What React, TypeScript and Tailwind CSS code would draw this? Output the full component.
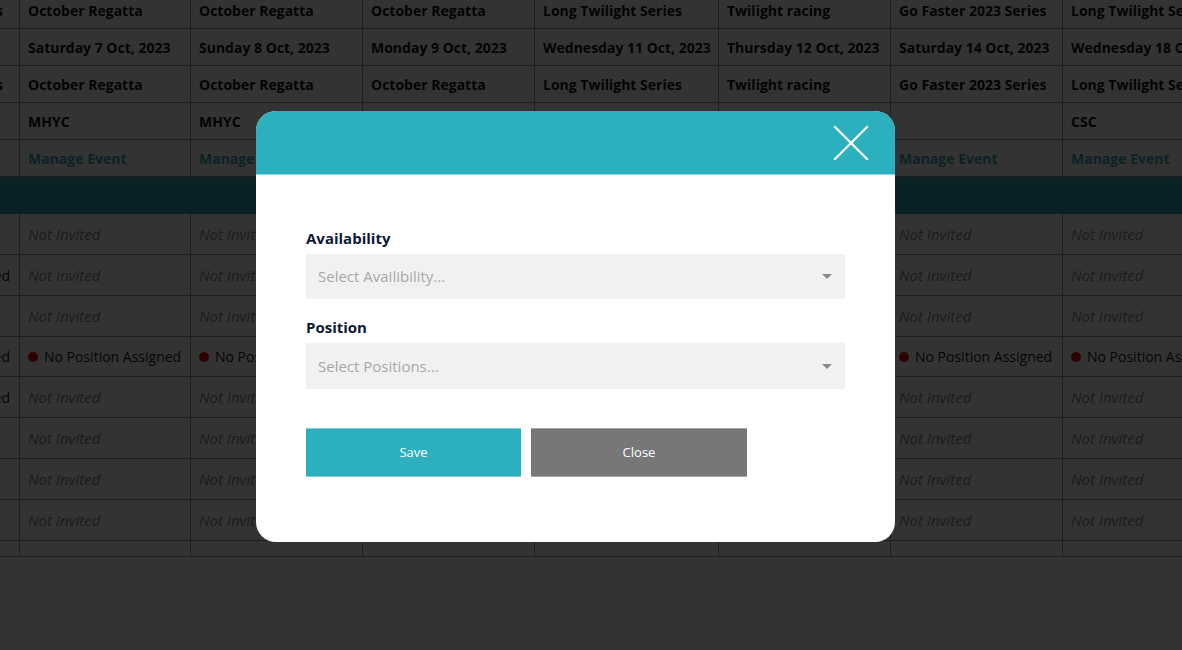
import React from 'react';

interface EventCol {
  width: string;
  series: string;
  date: string;
  club: string;
}

const columns: EventCol[] = [
  { width: 'w-[171px]', series: 'October Regatta', date: 'Saturday 7 Oct, 2023', club: 'MHYC' },
  { width: 'w-[172px]', series: 'October Regatta', date: 'Sunday 8 Oct, 2023', club: 'MHYC' },
  { width: 'w-[172px]', series: 'October Regatta', date: 'Monday 9 Oct, 2023', club: 'MHYC' },
  { width: 'w-[184px]', series: 'Long Twilight Series', date: 'Wednesday 11 Oct, 2023', club: 'MHYC' },
  { width: 'w-[172px]', series: 'Twilight racing', date: 'Thursday 12 Oct, 2023', club: 'MHYC' },
  { width: 'w-[172px]', series: 'Go Faster 2023 Series', date: 'Saturday 14 Oct, 2023', club: '' },
  { width: 'w-[172px]', series: 'Long Twilight Series', date: 'Wednesday 18 Oct, 2023', club: 'CSC' },
];

// rows of the crew grid: label tail shown in the clipped first column
const crewRows = [
  { label: '', status: 'not' },
  { label: 'Accepted', status: 'not' },
  { label: '', status: 'not' },
  { label: 'Accepted', status: 'none' },
  { label: 'Accepted', status: 'not' },
  { label: '', status: 'not' },
  { label: '', status: 'not' },
  { label: '', status: 'not' },
];

const HeadRow: React.FC<{ label?: string; h: string; children: (c: EventCol, i: number) => React.ReactNode }> = ({ label, h, children }) => (
  <div className={`flex ${h} border-b border-[#9a9a9a]`}>
    <div className="w-[20px] shrink-0 border-r border-[#9a9a9a] overflow-hidden flex items-center justify-end pr-[16px] whitespace-nowrap font-bold text-[#111]">
      {label}
    </div>
    {columns.map((c, i) => (
      <div key={i} className={`${c.width} shrink-0 border-r border-[#9a9a9a] flex items-center px-2 whitespace-nowrap overflow-hidden`}>
        {children(c, i)}
      </div>
    ))}
    <div className="w-[172px] shrink-0" />
  </div>
);

const App: React.FC = () => {
  return (
    <div className="relative w-[1182px] h-[650px] overflow-hidden bg-white font-['Open_Sans',sans-serif] text-[14px]">
      {/* Underlying schedule grid (scrolled) */}
      <div className="-mt-2">
        <HeadRow label="Series" h="h-[37px]">
          {(c) => <span className="font-bold text-[#111]">{c.series}</span>}
        </HeadRow>
        <HeadRow h="h-[37px]">
          {(c) => <span className="font-bold text-[#111]">{c.date}</span>}
        </HeadRow>
        <HeadRow label="Series" h="h-[37px]">
          {(c) => <span className="font-bold text-[#111]">{c.series}</span>}
        </HeadRow>
        <HeadRow h="h-[37px]">
          {(c) => <span className="font-bold text-[#111]">{c.club}</span>}
        </HeadRow>
        <HeadRow h="h-[37px]">
          {() => <span className="font-bold text-[#3aaab6]">Manage Event</span>}
        </HeadRow>
        <div className="h-[37px] bg-[#34a8b8]" />
        {crewRows.map((r, ri) => (
          <div key={ri} className={`flex ${ri === 3 ? 'h-[40px]' : 'h-[41px]'} border-b border-[#9a9a9a]`}>
            <div className="w-[20px] shrink-0 border-r border-[#9a9a9a] overflow-hidden flex items-center justify-end pr-[9px] whitespace-nowrap text-[#222]">
              {r.label}
            </div>
            {columns.map((c, i) => (
              <div key={i} className={`${c.width} shrink-0 border-r border-[#9a9a9a] flex items-center px-2 whitespace-nowrap overflow-hidden`}>
                {r.status === 'not' ? (
                  <span className="italic text-[15px] text-[#8a8a8a]">Not Invited</span>
                ) : (
                  <span className="flex items-center gap-[6px] text-[#222]">
                    <span className="w-[10px] h-[10px] rounded-full bg-[#e00000]" />
                    No Position Assigned
                  </span>
                )}
              </div>
            ))}
          </div>
        ))}
        <div className="flex h-[16px] border-b border-[#9a9a9a]">
          <div className="w-[20px] shrink-0 border-r border-[#9a9a9a]" />
          {columns.map((c, i) => (
            <div key={i} className={`${c.width} shrink-0 border-r border-[#9a9a9a]`} />
          ))}
        </div>
      </div>

      {/* Backdrop + modal */}
      <div className="absolute inset-0 bg-black/80 pl-[256px] pt-[111px]">
        <div className="w-[639px] h-[431px] bg-white rounded-[20px] overflow-hidden flex flex-col">
          <div className="h-[64px] bg-[#2cb0bd] border-b border-[#8fd9e0] flex items-center justify-end pr-[26px] shrink-0">
            <svg width="36" height="36" viewBox="0 0 36 36" fill="none" stroke="white" strokeWidth="2.2" strokeLinecap="square">
              <path d="M2 2 L34 34 M34 2 L2 34" />
            </svg>
          </div>
          <div className="px-[50px] pt-[53px]">
            <div className="font-bold text-[15px] leading-[20px] text-[#0e1a33] mb-[6px]">Availability</div>
            <div className="h-[45px] bg-[#f1f1f1] flex items-center justify-between pl-3 pr-[13px] text-[#a8a8a8] text-[15px]">
              <span>Select Availibility...</span>
              <span className="w-0 h-0 border-l-[5px] border-r-[5px] border-t-[5px] border-l-transparent border-r-transparent border-t-[#8a8a8a]" />
            </div>
            <div className="font-bold text-[15px] leading-[20px] text-[#0e1a33] mt-[18px] mb-[6px]">Position</div>
            <div className="h-[46px] bg-[#f1f1f1] flex items-center justify-between pl-3 pr-[13px] text-[#a8a8a8] text-[15px]">
              <span>Select Positions...</span>
              <span className="w-0 h-0 border-l-[5px] border-r-[5px] border-t-[5px] border-l-transparent border-r-transparent border-t-[#8a8a8a]" />
            </div>
            <div className="flex gap-[10px] mt-[39px]">
              <button className="w-[215px] h-[49px] bg-[#2cb0bd] border-t border-b border-[#7fd0d8] text-white text-[13px]">
                Save
              </button>
              <button className="w-[216px] h-[49px] bg-[#777777] border-t border-b border-[#a5a5a5] text-white text-[13px]">
                Close
              </button>
            </div>
          </div>
        </div>
      </div>
    </div>
  );
};

export default App;
